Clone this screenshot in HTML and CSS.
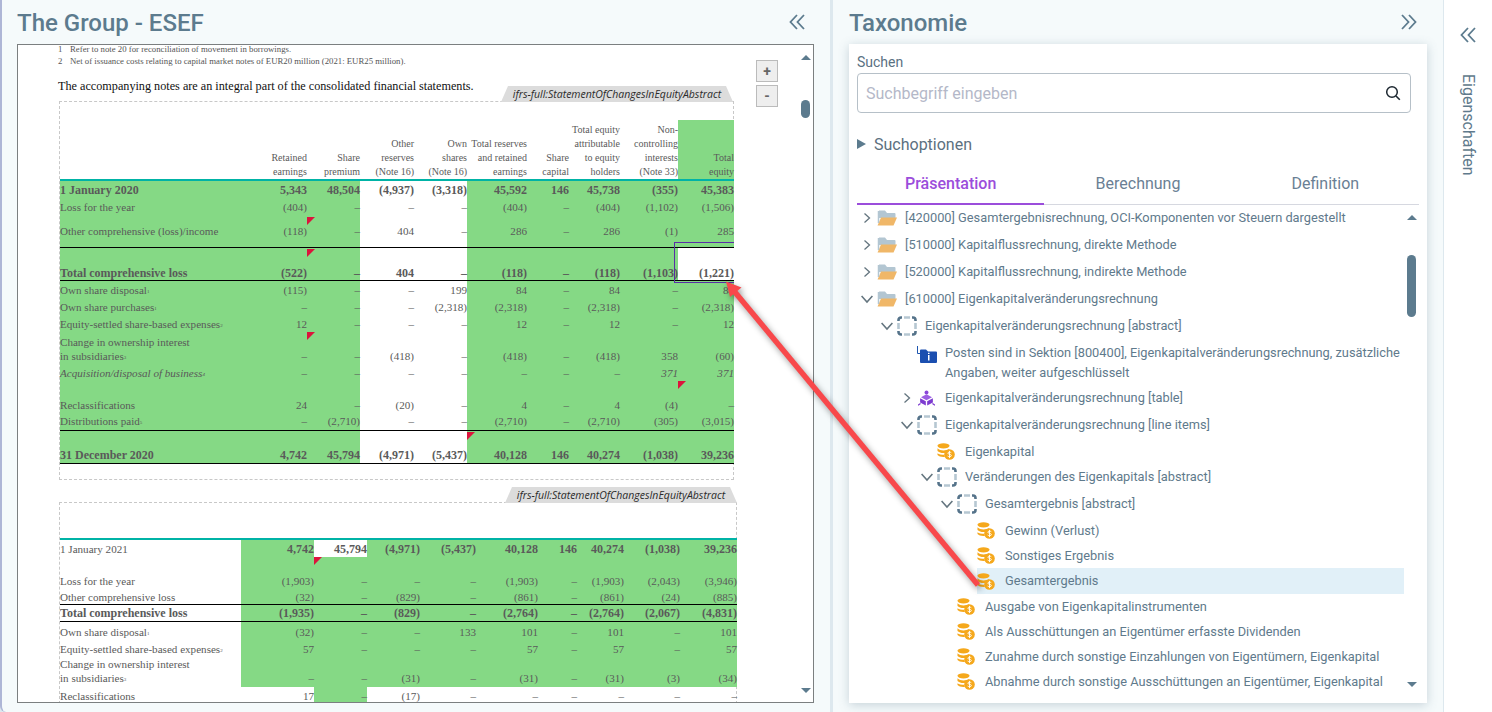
FILE: index.html
```html
<!DOCTYPE html>
<html lang="de">
<head>
<meta charset="utf-8">
<title>The Group - ESEF</title>
<link rel="stylesheet" href="styles.css">
</head>
<body>
<svg class="defs" width="0" height="0" aria-hidden="true">
  <symbol id="i-folder" viewBox="0 0 20 16">
    <path d="M2 .5h6l2 2.500h7.500a1 1 0 0 1 1 1V8H2z" fill="#b3c6d2"/>
    <path d="M.5 15.500 4 7.500h16l-3.500 8z" fill="#f0b768"/>
    <path d="M1.500 1v12" stroke="#b3c6d2" stroke-width="1.500"/>
  </symbol>
  <symbol id="i-abs" viewBox="0 0 20 20">
    <path d="M7 1.500H13M7 18.500H13M1.500 7V13M18.500 7V13" stroke="#b6c7d2" stroke-width="2.600" fill="none"/>
    <path d="M1.500 5V4a2.500 2.500 0 0 1 2.500-2.500H5M15 1.500H16A2.500 2.500 0 0 1 18.500 4V5M18.500 15V16A2.500 2.500 0 0 1 16 18.500H15M5 18.500H4A2.500 2.500 0 0 1 1.500 16V15" stroke="#55738a" stroke-width="2.600" fill="none"/>
  </symbol>
  <symbol id="i-coin" viewBox="0 0 18 17">
    <ellipse cx="6.500" cy="2.800" rx="6" ry="2.600" fill="#f5a81c"/>
    <path d="M.5 5.300c1.500 1.600 3.800 2.200 6 2.200 2 0 3.800-.4 5.400-1.400v1a7 7 0 0 0-3.600 2.800c-3 .4-6.300-.3-7.800-1.900z" fill="#f5a81c"/>
    <path d="M.5 10.300c1.500 1.100 3.500 1.500 7 1.500 0 .9.100 1.500.4 2.200-3.300.3-6-.4-7.400-1.900z" fill="#f5a81c"/>
    <circle cx="12.500" cy="11.500" r="5.300" fill="#f5a81c"/>
    <path d="M14.300 9.700c-.5-.6-3.300-1-3.400.5-.1 1.500 3.600.8 3.500 2.500-.1 1.400-3.100 1.100-3.800.3M12.500 7.900v7.200" stroke="#fff" stroke-width=".9" fill="none"/>
  </symbol>
  <symbol id="i-cube" viewBox="0 0 20 18">
    <circle cx="10" cy="2.500" r="2.300" fill="#8a46d8"/>
    <path d="M10 4.500 3.500 8 10 11.500 16.500 8z" fill="#9c5fe2"/>
    <path d="M2.500 9.200 9.200 12.800V17.800L2.500 14.200zM17.500 9.200 10.800 12.800V17.800L17.500 14.200z" fill="#7d3bd0"/>
    <path d="M0 17.500 3 15.500M20 17.500 17 15.500" stroke="#7d3bd0" stroke-width="1.500"/>
  </symbol>
  <symbol id="i-info" viewBox="0 0 20 17">
    <path d="M.5 0v7.500H3" stroke="#1e56b0" stroke-width="1" fill="none"/>
    <path d="M3 4.500a1 1 0 0 1 1-1h5l2 2h8a1 1 0 0 1 1 1V16a1 1 0 0 1-1 1H4a1 1 0 0 1-1-1z" fill="#1b4fb0"/>
    <path d="M11 9h1.500v5.500H11zM11 6.800h1.500v1.200H11z" fill="#fff"/>
  </symbol>
  <symbol id="i-dbl-l" viewBox="0 0 16 16">
    <path d="M8 1 1.500 8 8 15M15 1 8.500 8 15 15" fill="none" stroke="#5c7b8e" stroke-width="1.800"/>
  </symbol>
  <symbol id="i-dbl-r" viewBox="0 0 16 16">
    <path d="M1 1 7.500 8 1 15M8 1 14.500 8 8 15" fill="none" stroke="#5c7b8e" stroke-width="1.800"/>
  </symbol>
  <symbol id="i-chev-r" viewBox="0 0 10 12">
    <path d="M2.500 1.500 7.500 6 2.500 10.500" fill="none" stroke="#64757f" stroke-width="1.300"/>
  </symbol>
  <symbol id="i-chev-d" viewBox="0 0 12 10">
    <path d="M1.500 2.500 6 7.500 10.500 2.500" fill="none" stroke="#64757f" stroke-width="1.300"/>
  </symbol>
</svg>

<main class="app">
  <section class="panel panel-doc">
    <header class="panel-head">
      <h1 class="panel-title">The Group - ESEF</h1>
      <svg class="dbl"><use href="#i-dbl-l"/></svg>
    </header>
    <div class="viewer">
      <div class="doc">
        <p class="note"><span class="note-n">1</span>Refer to note 20 for reconciliation of movement in borrowings.</p>
        <p class="note"><span class="note-n">2</span>Net of issuance costs relating to capital market notes of EUR20 million (2021: EUR25 million).</p>
        <p class="lead">The accompanying notes are an integral part of the consolidated financial statements.</p>

        <div class="fact-box box-a">
          <div class="tag">ifrs-full:StatementOfChangesInEquityAbstract</div>
          <table class="fin">
            <colgroup>
              <col class="a0"><col class="a1"><col class="a2"><col class="a3"><col class="a4"><col class="a5"><col class="a6"><col class="a7"><col class="a8"><col class="a9">
            </colgroup>
            <tr class="r-head">
              <td></td><td>Retained<br>earnings</td><td>Share<br>premium</td><td>Other<br>reserves<br>(Note 16)</td><td>Own<br>shares<br>(Note 16)</td><td>Total reserves<br>and retained<br>earnings</td><td>Share<br>capital</td><td>Total equity<br>attributable<br>to equity<br>holders</td><td>Non-<br>controlling<br>interests<br>(Note 33)</td><td class="g">Total<br>equity</td>
            </tr>
            <tr class="h17 b teal">
              <td class="g lbl">1 January 2020</td><td class="g">5,343</td><td class="g">48,504</td><td>(4,937)</td><td>(3,318)</td><td class="g">45,592</td><td class="g">146</td><td class="g">45,738</td><td class="g">(355)</td><td class="g">45,383</td>
            </tr>
            <tr class="h18">
              <td class="g lbl">Loss for the year</td><td class="g">(404)</td><td class="g">–</td><td>–</td><td>–</td><td class="g">(404)</td><td class="g">–</td><td class="g">(404)</td><td class="g">(1,102)</td><td class="g">(1,506)</td>
            </tr>
            <tr class="h32 rule pb2">
              <td class="g lbl">Other comprehensive (loss)/income</td><td class="g flag">(118)</td><td class="g">–</td><td>404</td><td>–</td><td class="g">286</td><td class="g">–</td><td class="g">286</td><td class="g">(1)</td><td class="g">285</td>
            </tr>
            <tr class="h33 b bot rule">
              <td class="g lbl">Total comprehensive loss</td><td class="g flag">(522)</td><td class="g">–</td><td>404</td><td>–</td><td class="g">(118)</td><td class="g">–</td><td class="g">(118)</td><td class="g">(1,103)</td><td class="sel">(1,221)</td>
            </tr>
            <tr class="h17">
              <td class="g lbl">Own share disposal<sup>1</sup></td><td class="g">(115)</td><td class="g">–</td><td>–</td><td>199</td><td class="g">84</td><td class="g">–</td><td class="g">84</td><td class="g">–</td><td class="g">84</td>
            </tr>
            <tr class="h17">
              <td class="g lbl">Own share purchases<sup>1</sup></td><td class="g">–</td><td class="g">–</td><td>–</td><td>(2,318)</td><td class="g">(2,318)</td><td class="g">–</td><td class="g">(2,318)</td><td class="g">–</td><td class="g">(2,318)</td>
            </tr>
            <tr class="h17">
              <td class="g lbl">Equity-settled share-based expenses<sup>2</sup></td><td class="g">12</td><td class="g">–</td><td>–</td><td>–</td><td class="g">12</td><td class="g">–</td><td class="g">12</td><td class="g">–</td><td class="g">12</td>
            </tr>
            <tr class="h32 bot pb1">
              <td class="g lbl">Change in ownership interest<br>in subsidiaries<sup>3</sup></td><td class="g flag">–</td><td class="g">–</td><td>(418)</td><td>–</td><td class="g">(418)</td><td class="g">–</td><td class="g">(418)</td><td class="g">358</td><td class="g">(60)</td>
            </tr>
            <tr class="h17 i">
              <td class="g lbl">Acquisition/disposal of business<sup>4</sup></td><td class="g">–</td><td class="g">–</td><td>–</td><td>–</td><td class="g">–</td><td class="g">–</td><td class="g">–</td><td class="g">371</td><td class="g">371</td>
            </tr>
            <tr class="h15">
              <td class="g"></td><td class="g"></td><td class="g"></td><td></td><td></td><td class="g"></td><td class="g"></td><td class="g"></td><td class="g flag"></td><td class="g"></td>
            </tr>
            <tr class="h17">
              <td class="g lbl">Reclassifications</td><td class="g">24</td><td class="g">–</td><td>(20)</td><td>–</td><td class="g">4</td><td class="g">–</td><td class="g">4</td><td class="g">(4)</td><td class="g">–</td>
            </tr>
            <tr class="h18 rule pb2">
              <td class="g lbl">Distributions paid<sup>5</sup></td><td class="g">–</td><td class="g">(2,710)</td><td>–</td><td>–</td><td class="g">(2,710)</td><td class="g">–</td><td class="g">(2,710)</td><td class="g">(305)</td><td class="g">(3,015)</td>
            </tr>
            <tr class="h33 b bot rule pb1">
              <td class="g lbl">31 December 2020</td><td class="g">4,742</td><td class="g">45,794</td><td>(4,971)</td><td class="flag">(5,437)</td><td class="g">40,128</td><td class="g">146</td><td class="g">40,274</td><td class="g">(1,038)</td><td class="g">39,236</td>
            </tr>
          </table>
          <div class="sel-box"></div>
        </div>

        <div class="fact-box box-b">
          <div class="tag">ifrs-full:StatementOfChangesInEquityAbstract</div>
          <table class="fin">
            <colgroup>
              <col class="b0"><col class="b1"><col class="b2"><col class="b3"><col class="b4"><col class="b5"><col class="b6"><col class="b7"><col class="b8"><col class="b9">
            </colgroup>
            <tr class="r-blank"><td colspan="10"></td></tr>
            <tr class="h17 b teal">
              <td class="lbl plain">1 January 2021</td><td class="g">4,742</td><td>45,794</td><td class="g">(4,971)</td><td class="g">(5,437)</td><td class="g">40,128</td><td class="g">146</td><td class="g">40,274</td><td class="g">(1,038)</td><td class="g">39,236</td>
            </tr>
            <tr class="h15">
              <td></td><td class="g"></td><td class="g flag-b"></td><td class="g"></td><td class="g"></td><td class="g"></td><td class="g"></td><td class="g"></td><td class="g"></td><td class="g"></td>
            </tr>
            <tr class="h17">
              <td class="lbl">Loss for the year</td><td class="g">(1,903)</td><td class="g">–</td><td class="g">–</td><td class="g">–</td><td class="g">(1,903)</td><td class="g">–</td><td class="g">(1,903)</td><td class="g">(2,043)</td><td class="g">(3,946)</td>
            </tr>
            <tr class="h16 rule">
              <td class="lbl">Other comprehensive loss</td><td class="g">(32)</td><td class="g">–</td><td class="g">(829)</td><td class="g">–</td><td class="g">(861)</td><td class="g">–</td><td class="g">(861)</td><td class="g">(24)</td><td class="g">(885)</td>
            </tr>
            <tr class="h17 b rule">
              <td class="lbl">Total comprehensive loss</td><td class="g">(1,935)</td><td class="g">–</td><td class="g">(829)</td><td class="g">–</td><td class="g">(2,764)</td><td class="g">–</td><td class="g">(2,764)</td><td class="g">(2,067)</td><td class="g">(4,831)</td>
            </tr>
            <tr class="h19">
              <td class="lbl">Own share disposal<sup>1</sup></td><td class="g">(32)</td><td class="g">–</td><td class="g">–</td><td class="g">133</td><td class="g">101</td><td class="g">–</td><td class="g">101</td><td class="g">–</td><td class="g">101</td>
            </tr>
            <tr class="h16">
              <td class="lbl">Equity-settled share-based expenses<sup>2</sup></td><td class="g">57</td><td class="g">–</td><td class="g">–</td><td class="g">–</td><td class="g">57</td><td class="g">–</td><td class="g">57</td><td class="g">–</td><td class="g">57</td>
            </tr>
            <tr class="h30 bot pb2">
              <td class="lbl">Change in ownership interest<br>in subsidiaries<sup>3</sup></td><td class="g">–</td><td class="g">–</td><td class="g">(31)</td><td class="g">–</td><td class="g">(31)</td><td class="g">–</td><td class="g">(31)</td><td class="g">(3)</td><td class="g">(34)</td>
            </tr>
            <tr class="h17">
              <td class="lbl">Reclassifications</td><td>17</td><td class="g">–</td><td>(17)</td><td>–</td><td>–</td><td>–</td><td>–</td><td>–</td><td>–</td>
            </tr>
          </table>
        </div>
      </div>
      <button class="zoom-btn zoom-in" type="button">+</button>
      <button class="zoom-btn zoom-out" type="button">-</button>
      <div class="vbar vbar-doc"><i class="up"></i><i class="thumb"></i><i class="down"></i></div>
    </div>
  </section>

  <section class="panel panel-tax">
    <header class="panel-head">
      <h2 class="panel-title">Taxonomie</h2>
      <svg class="dbl"><use href="#i-dbl-r"/></svg>
    </header>
    <div class="card">
      <label class="field-label" for="q">Suchen</label>
      <div class="search">
        <input id="q" class="search-input" type="text" placeholder="Suchbegriff eingeben">
        <svg class="search-icon" viewBox="0 0 16 16"><circle cx="7" cy="7" r="5.300" fill="none" stroke="#1c2730" stroke-width="1.500"/><path d="m11 11 3.800 3.800" stroke="#1c2730" stroke-width="1.600"/></svg>
      </div>
      <div class="options"><i class="caret"></i>Suchoptionen</div>
      <nav class="tabs">
        <a class="tab active">Präsentation</a>
        <a class="tab">Berechnung</a>
        <a class="tab">Definition</a>
      </nav>
      <div class="tree-wrap">
        <ul class="tree">
          <li class="row r27 l0"><svg class="chev"><use href="#i-chev-r"/></svg><svg class="ico folder"><use href="#i-folder"/></svg><span>[420000] Gesamtergebnisrechnung, OCI-Komponenten vor Steuern dargestellt</span></li>
          <li class="row r27 l0"><svg class="chev"><use href="#i-chev-r"/></svg><svg class="ico folder"><use href="#i-folder"/></svg><span>[510000] Kapitalflussrechnung, direkte Methode</span></li>
          <li class="row r27 l0"><svg class="chev"><use href="#i-chev-r"/></svg><svg class="ico folder"><use href="#i-folder"/></svg><span>[520000] Kapitalflussrechnung, indirekte Methode</span></li>
          <li class="row r27 l0"><svg class="chev"><use href="#i-chev-d"/></svg><svg class="ico folder"><use href="#i-folder"/></svg><span>[610000] Eigenkapitalveränderungsrechnung</span></li>
          <li class="row r27 l1"><svg class="chev"><use href="#i-chev-d"/></svg><svg class="ico abs"><use href="#i-abs"/></svg><span>Eigenkapitalveränderungsrechnung [abstract]</span></li>
          <li class="row r45 l2"><i class="chev"></i><svg class="ico info"><use href="#i-info"/></svg><span>Posten sind in Sektion [800400], Eigenkapitalveränderungsrechnung, zusätzliche Angaben, weiter aufgeschlüsselt</span></li>
          <li class="row r27 l2"><svg class="chev"><use href="#i-chev-r"/></svg><svg class="ico cube"><use href="#i-cube"/></svg><span>Eigenkapitalveränderungsrechnung [table]</span></li>
          <li class="row r27 l2"><svg class="chev"><use href="#i-chev-d"/></svg><svg class="ico abs"><use href="#i-abs"/></svg><span>Eigenkapitalveränderungsrechnung [line items]</span></li>
          <li class="row r26 l3 nudge"><i class="chev"></i><svg class="ico coin"><use href="#i-coin"/></svg><span>Eigenkapital</span></li>
          <li class="row r26 l3"><svg class="chev"><use href="#i-chev-d"/></svg><svg class="ico abs"><use href="#i-abs"/></svg><span>Veränderungen des Eigenkapitals [abstract]</span></li>
          <li class="row r27 l4"><svg class="chev"><use href="#i-chev-d"/></svg><svg class="ico abs"><use href="#i-abs"/></svg><span>Gesamtergebnis [abstract]</span></li>
          <li class="row r26 l5 nudge"><i class="chev"></i><svg class="ico coin"><use href="#i-coin"/></svg><span>Gewinn (Verlust)</span></li>
          <li class="row r25 l5"><i class="chev"></i><svg class="ico coin"><use href="#i-coin"/></svg><span>Sonstiges Ergebnis</span></li>
          <li class="row r26 l5"><i class="chev"></i><div class="hit"><svg class="ico coin"><use href="#i-coin"/></svg><span>Gesamtergebnis</span></div></li>
          <li class="row r25 l4"><i class="chev"></i><svg class="ico coin"><use href="#i-coin"/></svg><span>Ausgabe von Eigenkapitalinstrumenten</span></li>
          <li class="row r25 l4"><i class="chev"></i><svg class="ico coin"><use href="#i-coin"/></svg><span>Als Ausschüttungen an Eigentümer erfasste Dividenden</span></li>
          <li class="row r25 l4"><i class="chev"></i><svg class="ico coin"><use href="#i-coin"/></svg><span>Zunahme durch sonstige Einzahlungen von Eigentümern, Eigenkapital</span></li>
          <li class="row r25 l4"><i class="chev"></i><svg class="ico coin"><use href="#i-coin"/></svg><span>Abnahme durch sonstige Ausschüttungen an Eigentümer, Eigenkapital</span></li>
        </ul>
        <div class="vbar vbar-tree"><i class="up"></i><i class="thumb"></i><i class="down"></i></div>
      </div>
    </div>
  </section>

  <aside class="side">
    <svg class="dbl"><use href="#i-dbl-l"/></svg>
    <div class="side-label">Eigenschaften</div>
  </aside>
</main>

<svg class="arrow" viewBox="0 0 1492 712" aria-hidden="true">
  <g class="arrow-g">
    <path d="M978 585 734 291" stroke="#f8484b" stroke-width="5.500" fill="none"/>
    <path d="M726 281.500 741.500 287.500 730 297z" fill="#f8484b"/>
  </g>
</svg>
</body>
</html>
```

FILE: styles.css
```css
* { box-sizing: border-box; }
html, body { margin: 0; height: 100%; }
body {
  position: relative;
  width: 1492px;
  height: 712px;
  overflow: hidden;
  background: #dde8ee;
  font-family: Roboto, "Liberation Sans", sans-serif;
  color: #5c7b8e;
}
.defs { position: absolute; }
.app { display: flex; height: 712px; }

.panel { background: #f5fafb; display: flex; flex-direction: column; height: 712px; }
.panel-doc { width: 830px; padding: 0 16px 0 15px; border-left: 2px solid #aeb6d6; border-bottom-left-radius: 6px; }
.panel-tax { width: 610px; margin-left: 3px; padding: 0 16px; }
.panel-head { height: 44px; flex: none; display: flex; align-items: center; justify-content: space-between; }
.panel-doc .panel-head { padding-right: 9px; }
.panel-tax .panel-head { padding-right: 10px; }
.panel-title { margin: 0; padding-top: 2px; font-size: 24px; font-weight: 500; color: #5c7b8e; line-height: 42px; }
.dbl { width: 16px; height: 16px; flex: none; }

/* document viewer */
.viewer {
  position: relative;
  width: 797px;
  height: 659px;
  background: #fff;
  border: 1px solid #7b7f80;
  overflow: hidden;
  flex: none;
}
.doc { margin-top: -1px; padding: 0 0 0 40px; font-family: "Liberation Serif", serif; color: #5a5a5a; }
.note { margin: 0; height: 12px; font-size: 8.75px; line-height: 11px; color: #555; white-space: nowrap; }
.note-n { display: inline-block; width: 12px; }
.lead { margin: 11px 0 0; height: 15px; font-size: 12.2px; line-height: 15px; color: #111; white-space: nowrap; }

.fact-box { position: relative; border: 1px dashed #c8c8c8; }
.box-a { width: 675px; height: 379px; margin: 7px 0 0 1px; padding-top: 18px; }
.box-b { width: 678px; margin: 22px 0 0 1px; border-bottom: 0; }
.tag {
  position: absolute;
  top: -16px;
  right: 0;
  width: 232px;
  height: 16px;
  text-align: center;
  background: #dcdcdc;
  clip-path: polygon(7px 0, calc(100% - 7px) 0, 100% 100%, 0 100%);
  font: italic 10.5px/16px "Open Sans", sans-serif;
  color: #2b2b2b;
  white-space: nowrap;
}
.box-b .tag { right: -1px; }

.fin { border-collapse: separate; border-spacing: 0; table-layout: fixed; width: 100%; font-size: 11.1px; line-height: 14px; }
.fin td { padding: 0; text-align: right; white-space: nowrap; vertical-align: middle; }
.fin td.lbl { text-align: left; }
.fin sup { font-size: 5px; line-height: 0; vertical-align: 1px; }
.a0 { width: 193px; } .a1 { width: 54px; } .a2 { width: 53px; } .a3 { width: 54px; } .a4 { width: 53px; }
.a5 { width: 60px; } .a6 { width: 42px; } .a7 { width: 51px; } .a8 { width: 58px; } .a9 { width: 56px; }
.b0 { width: 181px; } .b1 { width: 73px; } .b2 { width: 53px; } .b3 { width: 53px; } .b4 { width: 56px; }
.b5 { width: 62px; } .b6 { width: 39px; } .b7 { width: 47px; } .b8 { width: 56px; } .b9 { width: 57px; }

.r-head td { height: 61px; vertical-align: bottom; font-size: 10px; line-height: 14px; border-bottom: 2px solid #00b3a6; }
.r-blank td { height: 37px; border-bottom: 2px solid #00b3a6; }
.g { background: #85d985; }
.sel { background: #fff; position: relative; }
.h15 td { height: 15px; } .h16 td { height: 16px; } .h17 td { height: 17px; } .h18 td { height: 18px; } .h19 td { height: 19px; }
.h30 td { height: 30px; } .h32 td { height: 32px; } .h33 td { height: 33px; }
.b td { font-weight: 700; font-size: 12px; }
.fin td.plain { font-weight: 400; font-size: 11.1px; }
.i td { font-style: italic; }
.bot td { vertical-align: bottom; }
.rule td { border-bottom: 1.5px solid #000; }
.pb1 td { padding-bottom: 1px; }
.pb2 td { padding-bottom: 2px; }

.flag, .flag-b { position: relative; }
.flag::after, .flag-b::after {
  content: "";
  position: absolute;
  left: 100%;
  top: 0;
  width: 8px;
  height: 8px;
  background: #dc143c;
  clip-path: polygon(0 0, 100% 0, 0 100%);
}
.rule .flag::after { top: 1px; }
.flag-b::after { left: 0; }
.sel-box {
  position: absolute;
  left: 614px;
  top: 140px;
  width: 60px;
  height: 41px;
  border: 1.500px solid #5a2ea6;
  border-right: 0;
}

.zoom-btn {
  position: absolute;
  left: 738px;
  width: 22px;
  height: 22px;
  padding: 0;
  background: #eee;
  border: 1px solid #bbb;
  color: #666;
  font: 700 14px/18px Roboto, sans-serif;
}
.zoom-in { top: 15px; }
.zoom-out { top: 40px; }

.vbar { position: absolute; width: 10px; }
.vbar i { position: absolute; left: 0; display: block; }
.vbar .up { width: 0; height: 0; border: 5px solid transparent; border-top: 0; border-bottom: 5px solid #5c7b8e; }
.vbar .down { width: 0; height: 0; border: 5px solid transparent; border-bottom: 0; border-top: 5px solid #5c7b8e; }
.vbar .thumb { width: 9px; background: #5c7b8e; border-radius: 5px; }
.vbar-doc { right: 2px; top: 0; bottom: 0; }
.vbar-doc .up { top: 10px; }
.vbar-doc .thumb { top: 55px; height: 18px; }
.vbar-doc .down { top: 643px; }

/* taxonomy */
.card {
  flex: none;
  width: 578px;
  height: 659px;
  padding: 9px 8px 0;
  background: #fff;
  box-shadow: 0 2px 10px rgba(90, 120, 140, .3);
  overflow: hidden;
}
.field-label { display: block; height: 20px; font-size: 14px; line-height: 18px; color: #5a7182; }
.search { position: relative; width: 554px; height: 40px; }
.search-input {
  width: 100%;
  height: 100%;
  padding: 0 40px 0 8px;
  border: 1px solid #b6c0c8;
  border-radius: 4px;
  font: 16px Roboto, sans-serif;
  outline: 0;
  background: #fff;
}
.search-input::placeholder { color: #b4b8c8; opacity: 1; }
.search-icon { position: absolute; right: 10px; top: 12px; width: 16px; height: 16px; }
.options { display: flex; align-items: center; height: 22px; margin-top: 20px; font-size: 16px; color: #5c7080; }
.caret { width: 0; height: 0; margin-right: 8px; border-left: 9px solid #5c7b8e; border-top: 5px solid transparent; border-bottom: 5px solid transparent; }
.tabs { display: flex; width: 562px; height: 40px; margin-top: 10px; border-bottom: 1px solid #d6d8e0; }
.tab { width: 188px; height: 40px; text-align: center; font-size: 16px; line-height: 38px; color: #6a7f94; }
.tab.active { color: #9b4ddb; font-weight: 500; border-bottom: 2px solid #9b4ddb; }

.tree-wrap { position: relative; display: flex; width: 562px; height: 500px; overflow: hidden; }
.tree { list-style: none; margin: -1px 0 0; padding: 0; width: 547px; flex: none; font-size: 12.8px; color: #5f7a8c; }
.row { display: flex; align-items: center; line-height: 20px; }
.r25 { height: 25px; } .r26 { height: 26px; } .r27 { height: 27px; }
.r45 { height: 45px; align-items: flex-start; padding-top: 4px; }
.nudge { padding-top: 1px; }
.l0 { padding-left: 0; } .l1 { padding-left: 20px; } .l2 { padding-left: 40px; }
.l3 { padding-left: 60px; } .l4 { padding-left: 80px; } .l5 { padding-left: 100px; }
.chev { flex: none; width: 20px; height: 12px; display: block; }
.ico { flex: none; display: block; }
.folder { width: 20px; height: 16px; margin-right: 8px; }
.abs { width: 20px; height: 20px; margin-right: 8px; }
.coin { width: 18px; height: 17px; margin-right: 10px; }
.cube { width: 17px; height: 16px; margin: 0 10px 0 1px; }
.info { width: 20px; height: 17px; margin: 3px 8px 0 0; }
.hit { flex: 1; height: 26px; display: flex; align-items: center; background: #e1f0f8; }
.vbar-tree { right: 2px; top: 0; bottom: 0; }
.vbar-tree .up { top: 10px; }
.vbar-tree .thumb { top: 50px; height: 62px; }
.vbar-tree .down { top: 477px; }

/* right rail */
.side { flex: 1; margin-left: 1px; background: #fff; display: flex; flex-direction: column; align-items: center; padding-top: 27px; }
.side-label { margin-top: 31px; writing-mode: vertical-rl; font-size: 16px; line-height: 20px; color: #5f7a8c; }

.arrow { position: absolute; left: 0; top: 0; width: 1492px; height: 712px; pointer-events: none; }
.arrow-g { filter: drop-shadow(2px 3px 3px rgba(0, 0, 0, .4)); }
```
